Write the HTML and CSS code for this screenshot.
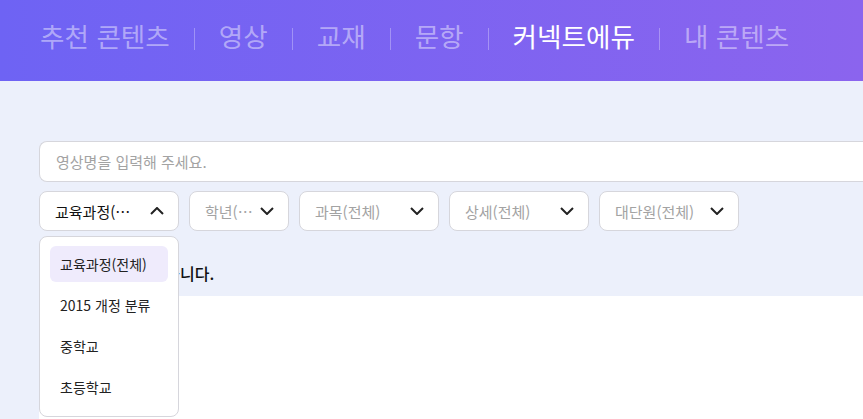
FILE: index.html
```html
<!DOCTYPE html>
<html lang="ko">
<head>
    <meta charset="utf-8">
    <title>커넥트에듀</title>
    <link rel="stylesheet" href="styles.css">
</head>
<body>
    <!-- Top tabs -->
    <header class="top-tabs">
        <a href="#" class="tab">추천 콘텐츠</a>
        <span class="sep"></span>
        <a href="#" class="tab">영상</a>
        <span class="sep"></span>
        <a href="#" class="tab">교재</a>
        <span class="sep"></span>
        <a href="#" class="tab">문항</a>
        <span class="sep"></span>
        <a href="#" class="tab active">커넥트에듀</a>
        <span class="sep"></span>
        <a href="#" class="tab">내 콘텐츠</a>
    </header>

    <main class="page">
        <section class="search-area">
            <input class="search-input" type="text" placeholder="영상명을 입력해 주세요.">

            <div class="filters">
                <div class="select-wrap">
                    <button class="select open">
                        <span class="select-label">교육과정(…</span>
                        <svg class="chev" width="14" height="8" viewBox="0 0 14 8"><path d="M1 7L7 1L13 7" fill="none" stroke="#222" stroke-width="2"/></svg>
                    </button>
                    <ul class="dropdown">
                        <li class="selected">교육과정(전체)</li>
                        <li>2015 개정 분류</li>
                        <li>중학교</li>
                        <li>초등학교</li>
                    </ul>
                </div>
                <button class="select w-small">
                    <span class="select-label placeholder">학년(…</span>
                    <svg class="chev" width="14" height="8" viewBox="0 0 14 8"><path d="M1 1L7 7L13 1" fill="none" stroke="#222" stroke-width="2"/></svg>
                </button>
                <button class="select">
                    <span class="select-label placeholder">과목(전체)</span>
                    <svg class="chev" width="14" height="8" viewBox="0 0 14 8"><path d="M1 1L7 7L13 1" fill="none" stroke="#222" stroke-width="2"/></svg>
                </button>
                <button class="select">
                    <span class="select-label placeholder">상세(전체)</span>
                    <svg class="chev" width="14" height="8" viewBox="0 0 14 8"><path d="M1 1L7 7L13 1" fill="none" stroke="#222" stroke-width="2"/></svg>
                </button>
                <button class="select">
                    <span class="select-label placeholder">대단원(전체)</span>
                    <svg class="chev" width="14" height="8" viewBox="0 0 14 8"><path d="M1 1L7 7L13 1" fill="none" stroke="#222" stroke-width="2"/></svg>
                </button>
            </div>

            <p class="result-msg">검색 결과가 없습니다.</p>
        </section>

        <section class="results"></section>
    </main>
</body>
</html>
```

FILE: styles.css
```css
:root {
    --brand-left: #6e63f4;
    --brand-right: #8b64ee;
    --page-bg: #ecf0fb;
    --border: #d6d6dc;
    --text: #111111;
    --muted: #a3a3a3;
}

* {
    box-sizing: border-box;
}

body {
    margin: 0;
    font-family: "Noto Sans CJK KR", "Noto Sans", sans-serif;
    background-color: var(--page-bg);
    color: var(--text);
    overflow: hidden;
}

.top-tabs {
    height: 81px;
    display: flex;
    align-items: center;
    gap: 24px;
    padding: 0 0 8px 40px;
    background: linear-gradient(90deg, var(--brand-left), var(--brand-right));
}

.tab {
    font-size: 26.6px;
    line-height: 1;
    color: rgba(255, 255, 255, 0.45);
    text-decoration: none;
}

.tab.active {
    color: #ffffff;
}

.sep {
    width: 1px;
    height: 22px;
    margin-top: 4px;
    background-color: rgba(255, 255, 255, 0.3);
}

.page {
    padding-left: 39px;
}

.search-area {
    padding-top: 60px;
    height: 215px;
}

.search-input {
    display: block;
    width: 830px;
    height: 41px;
    padding: 0 16px;
    border: 1px solid var(--border);
    border-right: none;
    border-radius: 8px 0 0 8px;
    background: #ffffff;
    font-family: inherit;
    font-size: 15px;
    outline: none;
}

.search-input::placeholder {
    color: var(--muted);
}

.filters {
    display: flex;
    gap: 10px;
    margin-top: 9px;
}

.select-wrap {
    position: relative;
}

.select {
    display: flex;
    align-items: center;
    justify-content: space-between;
    width: 140px;
    height: 40px;
    padding: 0 14px 0 15px;
    border: 1px solid var(--border);
    border-radius: 8px;
    background: #ffffff;
    font-family: inherit;
    font-size: 15px;
    color: var(--text);
    cursor: pointer;
}

.select.w-small {
    width: 100px;
}

.select-label {
    white-space: nowrap;
}

.select-label.placeholder {
    color: var(--muted);
}

.chev {
    flex-shrink: 0;
}

.dropdown {
    position: absolute;
    top: 45px;
    left: 0;
    width: 140px;
    height: 181px;
    margin: 0;
    padding: 9px 10px;
    list-style: none;
    overflow: hidden;
    background: #ffffff;
    border: 1px solid var(--border);
    border-radius: 8px;
    z-index: 5;
}

.dropdown li {
    height: 36px;
    margin-bottom: 5px;
    padding-left: 10px;
    display: flex;
    align-items: center;
    font-size: 14px;
    color: #222222;
    border-radius: 6px;
}

.dropdown li.selected {
    background-color: #efebfc;
}

.result-msg {
    margin: 30px 0 0 29px;
    font-size: 16px;
    font-weight: 500;
    color: #111111;
}

.results {
    height: 124px;
    background: #ffffff;
}
```
